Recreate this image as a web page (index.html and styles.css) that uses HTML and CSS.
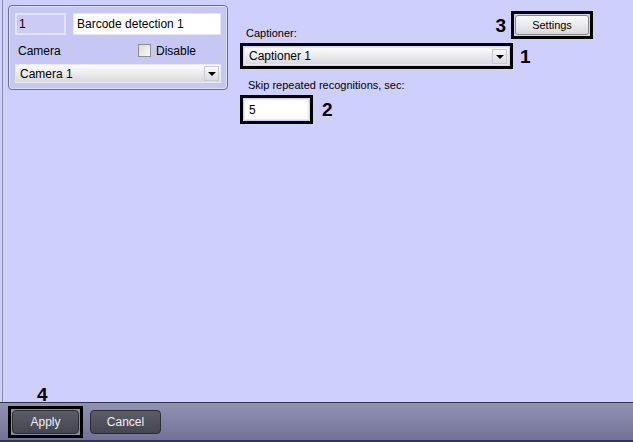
FILE: index.html
```html
<!DOCTYPE html>
<html lang="en">
<head>
  <meta charset="UTF-8" />
  <title>Barcode detection</title>
  <link rel="stylesheet" href="styles.css">
</head>
<body>

  <div class="screen">
    <div class="workspace">

      <div class="object-panel">
        <div class="panel-row">
          <div class="field id-field">1</div>
          <div class="field name-field">Barcode detection 1</div>
        </div>
        <div class="panel-row camera-row">
          <span class="label">Camera</span>
          <label class="check">
            <span class="check-box"></span>
            <span>Disable</span>
          </label>
        </div>
        <div class="combo camera-combo">
          <span class="combo-text">Camera 1</span>
          <span class="combo-btn"><span class="arrow"></span></span>
        </div>
      </div>

      <div class="settings-col">
        <div class="top-row">
          <span class="caption-label">Captioner:</span>
          <span class="mark mark-3">3</span>
          <div class="highlight">
            <button class="btn-light">Settings</button>
          </div>
        </div>

        <div class="marked-row">
          <div class="highlight captioner-box">
            <div class="combo">
              <span class="combo-text">Captioner 1</span>
              <span class="combo-btn"><span class="arrow"></span></span>
            </div>
          </div>
          <span class="mark">1</span>
        </div>

        <div class="skip-label">Skip repeated recognitions, sec:</div>

        <div class="marked-row">
          <div class="highlight">
            <div class="field skip-field">5</div>
          </div>
          <span class="mark mark-2">2</span>
        </div>
      </div>

    </div>

    <div class="footer">
      <span class="mark mark-4">4</span>
      <div class="highlight">
        <button class="btn-dark apply">Apply</button>
      </div>
      <button class="btn-dark cancel">Cancel</button>
    </div>
  </div>

</body>
</html>
```

FILE: styles.css
```css
body {
  margin: 0;
  background: #cfcffd;
  font-family: 'Liberation Sans', Arial, sans-serif;
  font-size: 11px;
  color: #000;
}

.screen {
  width: 633px;
  height: 442px;
  display: flex;
  flex-direction: column;
  background: #cfcffd;
}

.workspace {
  height: 402px;
  margin-left: 2px;
  border-left: 1px solid #8c8cac;
  padding: 5px 0 0 5px;
  display: flex;
  gap: 12px;
  box-sizing: border-box;
}

/* left object panel */
.object-panel {
  width: 220px;
  height: 85px;
  box-sizing: border-box;
  border: 1px solid #6e6e8e;
  border-radius: 4px;
  box-shadow: inset 0 0 0 1px #dedefc;
  background: #c7c7f3;
  padding: 7px 6px 0 6px;
}

.panel-row {
  display: flex;
  gap: 7px;
}

.field {
  height: 22px;
  box-sizing: border-box;
  border: 1px solid #e4e4fb;
  padding: 3px 3px 0;
  font-size: 12px;
}

.id-field {
  width: 51px;
  background: #cbcbf6;
  border: 2px solid #e2e2fb;
  padding: 2px 2px 0;
}

.name-field {
  flex: 1;
  background: #fff;
}

.camera-row {
  margin-top: 9px;
  height: 13px;
  align-items: center;
  justify-content: space-between;
  padding-left: 3px;
  padding-right: 25px;
}

.check {
  display: flex;
  align-items: center;
  gap: 5px;
  font-size: 12px;
}

.check-box {
  width: 11px;
  height: 11px;
  border: 1px solid #8e8f8f;
  background: linear-gradient(135deg, #dcdcd6, #f7f7f5);
}

.label {
  font-size: 12px;
}

/* combo boxes */
.combo {
  height: 18px;
  box-sizing: border-box;
  border: 1px solid #e8e8f6;
  background: linear-gradient(#fdfdfd, #d9d9de);
  display: flex;
  align-items: center;
  justify-content: space-between;
  padding-left: 4px;
  font-size: 12px;
}

.camera-combo {
  margin-top: 7px;
  height: 19px;
}

.combo-btn {
  width: 15px;
  height: 15px;
  margin-right: 1px;
  box-sizing: border-box;
  border: 1px solid #c9c9cf;
  background: linear-gradient(#fafafa, #dcdce0);
  display: flex;
  align-items: center;
  justify-content: center;
}

.arrow {
  width: 0;
  height: 0;
  border-left: 4px solid transparent;
  border-right: 4px solid transparent;
  border-top: 4px solid #000;
  margin-top: 1px;
}

/* right column */
.settings-col {
  flex: 1;
  padding-right: 40px;
  display: flex;
  flex-direction: column;
  align-items: flex-start;
}

.top-row {
  align-self: stretch;
  display: flex;
  align-items: flex-end;
  margin-top: 6px;
}

.caption-label {
  flex: 1;
  padding-left: 6px;
}

.highlight {
  border: 3px solid #000;
  padding: 1px;
  background: #cfcffd;
}

.captioner-box {
  width: 265px;
}

.btn-light {
  display: block;
  width: 74px;
  height: 20px;
  border: 1px solid #8a8a8e;
  border-radius: 3px;
  background: linear-gradient(#fbfbfb, #dadade);
  font-family: inherit;
  font-size: 11px;
  padding: 0;
}

.mark {
  font-weight: bold;
  font-size: 19px;
  line-height: 19px;
}

.mark-3 {
  align-self: center;
  margin-right: 5px;
}

.marked-row {
  display: flex;
  align-items: center;
  gap: 7px;
  margin-top: 4px;
}

.skip-label {
  margin-top: 10px;
  padding-left: 8px;
}

.skip-label + .marked-row {
  margin-top: 4px;
}

.skip-field {
  width: 65px;
  height: 21px;
  background: #fff;
  border: 1px solid #e8e8f2;
  padding: 3px 4px 0;
}

.mark-2 {
  margin-left: 2px;
}

/* bottom bar */
.footer {
  position: relative;
  height: 40px;
  box-sizing: border-box;
  border-top: 1px solid #33334a;
  border-bottom: 2px solid #34344a;
  background: linear-gradient(#9292b2, #727299);
  display: flex;
  align-items: center;
  gap: 7px;
  padding-left: 8px;
}

.footer .highlight {
  background: #8a8aac;
}

.mark-4 {
  position: absolute;
  left: 37px;
  top: -18px;
}

.btn-dark {
  height: 24px;
  border: 1px solid #2c2c36;
  border-radius: 4px;
  background: linear-gradient(#5c5c66, #464650);
  color: #f0f0f6;
  font-family: inherit;
  font-size: 12px;
  padding: 0;
}

.apply {
  display: block;
  width: 67px;
}

.cancel {
  width: 71px;
}
```
